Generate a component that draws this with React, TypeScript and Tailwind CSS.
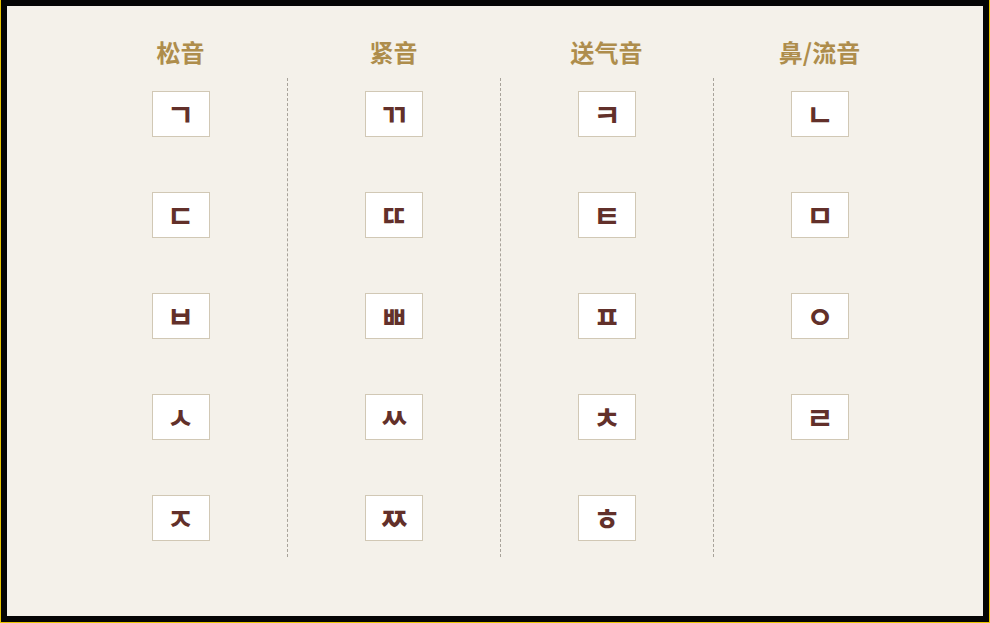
import React from 'react';

type Group = {
    title: string,
    letters: string[]
}

const groups: Group[] = [
    { title: '松音', letters: ['ㄱ', 'ㄷ', 'ㅂ', 'ㅅ', 'ㅈ'] },
    { title: '紧音', letters: ['ㄲ', 'ㄸ', 'ㅃ', 'ㅆ', 'ㅉ'] },
    { title: '送气音', letters: ['ㅋ', 'ㅌ', 'ㅍ', 'ㅊ', 'ㅎ'] },
    { title: '鼻/流音', letters: ['ㄴ', 'ㅁ', 'ㅇ', 'ㄹ'] },
];

const LetterBox: React.FC<{ letter: string }> = ({ letter }) => {
    return (
        <div className="w-[58px] h-[46px] bg-white border border-[#d1c8b5] flex items-center justify-center text-[30px] font-semibold text-[#62302a] leading-none pb-[2px]">
            {letter}
        </div>
    )
}

export default function App() {
    return (
        <div className="w-[990px] h-[623px] bg-[#050505] border-l border-r border-b border-[#e8c400] pl-[6px] pr-[6px] pt-[6px] pb-[6px] overflow-hidden"
            style={{ fontFamily: '"Noto Sans CJK SC", "Noto Sans CJK KR", sans-serif' }}>
            <div className="w-full h-full bg-[#f4f1ea] pl-[67px] pt-[30px]">
                {/* Headings */}
                <div className="grid grid-cols-[213px_213px_213px_213px]">
                    {groups.map(group => (
                        <h2 key={group.title} className="text-center text-[24px] font-bold leading-[32px] text-[#ae8d4c]">
                            {group.title}
                        </h2>
                    ))}
                </div>
                {/* Letter columns */}
                <div className="grid grid-cols-[213px_213px_213px_213px] mt-[10px] h-[479px]">
                    {groups.map((group, i) => (
                        <div key={group.title} className={`flex flex-col items-center gap-[55px] pt-[13px] ${i > 0 ? 'border-l border-dashed border-[#a8a39a]' : ''}`}>
                            {group.letters.map(letter => (
                                <LetterBox letter={letter} key={letter} />
                            ))}
                        </div>
                    ))}
                </div>
            </div>
        </div>
    )
}
